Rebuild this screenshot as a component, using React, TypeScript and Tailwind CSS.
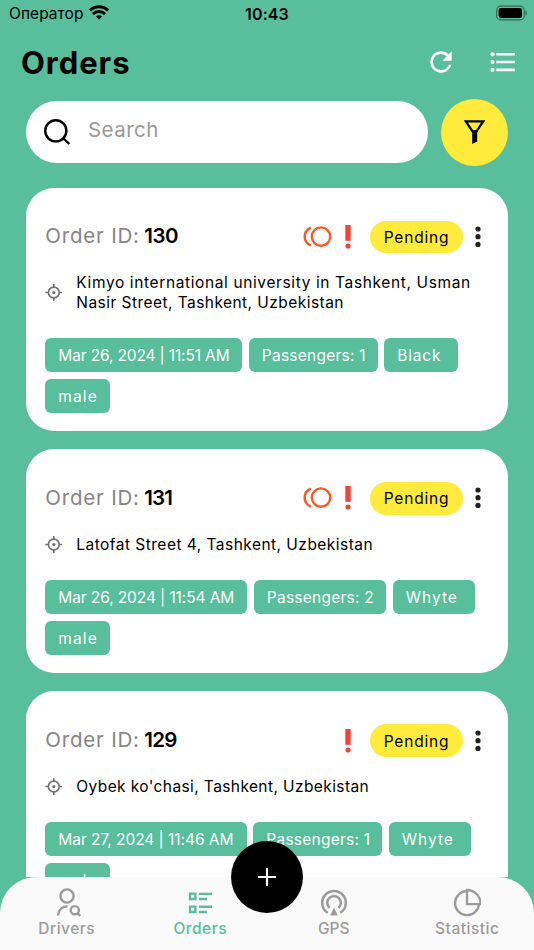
import React from 'react';
import { MdRefresh } from 'react-icons/md';
import clsx from 'clsx';

type Chip = { text: string; box: string; tracking: string };

type Order = {
  id: string;
  idTracking: string;
  toll: boolean;
  address: { text: string; tracking: string }[];
  chips: Chip[];
};

const male: Chip = { text: 'male', box: 'w-[65px]', tracking: 'tracking-[1.1px]' };

const orders: Order[] = [
  {
    id: '130',
    idTracking: 'tracking-[-0.5px]',
    toll: true,
    address: [
      { text: 'Kimyo international university in Tashkent, Usman', tracking: 'tracking-[0.62px]' },
      { text: 'Nasir Street, Tashkent, Uzbekistan', tracking: 'tracking-[0.45px]' },
    ],
    chips: [
      { text: 'Mar 26, 2024 | 11:51 AM', box: 'w-[197px]', tracking: 'tracking-[-0.14px]' },
      { text: 'Passengers: 1', box: 'w-[129px]', tracking: 'tracking-[0.25px]' },
      { text: 'Black', box: 'w-[73.5px]', tracking: 'tracking-[0.8px]' },
      male,
    ],
  },
  {
    id: '131',
    idTracking: 'tracking-[-0.9px]',
    toll: true,
    address: [{ text: 'Latofat Street 4, Tashkent, Uzbekistan', tracking: 'tracking-[0.47px]' }],
    chips: [
      { text: 'Mar 26, 2024 | 11:54 AM', box: 'w-[202px]', tracking: 'tracking-[-0.1px]' },
      { text: 'Passengers: 2', box: 'w-[132.5px]', tracking: 'tracking-[0.25px]' },
      { text: 'Whyte', box: 'w-[82px]', tracking: 'tracking-[1px]' },
      male,
    ],
  },
  {
    id: '129',
    idTracking: 'tracking-[-0.7px]',
    toll: false,
    address: [{ text: "Oybek ko'chasi, Tashkent, Uzbekistan", tracking: 'tracking-[0.4px]' }],
    chips: [
      { text: 'Mar 27, 2024 | 11:46 AM', box: 'w-[201.5px]', tracking: 'tracking-[-0.04px]' },
      { text: 'Passengers: 1', box: 'w-[129px]', tracking: 'tracking-[0.25px]' },
      { text: 'Whyte', box: 'w-[82px]', tracking: 'tracking-[1px]' },
      male,
    ],
  },
];

function StatusBar() {
  return (
    <div className="h-7 pl-[9px] pr-[6px] grid grid-cols-3 items-center text-[15.5px] leading-7 shrink-0">
      <div className="flex items-center gap-[5px]">
        <span className="tracking-[0.05px]">Оператор</span>
        <svg width="20" height="15" viewBox="0 0 20 15" fill="none" stroke="black" strokeWidth="2.9" className="-mt-[3px]">
          <path d="M1 5.4a12.8 12.8 0 0 1 18 0" />
          <path d="M4 9a8.5 8.5 0 0 1 12 0" />
          <path d="M10 14.6l-3-3a4.3 4.3 0 0 1 6 0z" fill="black" stroke="none" />
        </svg>
      </div>
      <span className="text-center font-semibold text-[16px] leading-[26px] tracking-[0.1px] -mt-px -ml-[3px]">10:43</span>
      <svg width="32" height="16" viewBox="0 0 32 16" className="justify-self-end -mt-[3px]">
        <rect x="0.6" y="1.1" width="27.6" height="13.8" rx="4" fill="none" stroke="black" strokeOpacity="0.45" strokeWidth="1.1" />
        <rect x="2.6" y="3" width="23.4" height="10" rx="2.2" fill="black" />
        <path d="M29.5 5.6c1.8.6 1.8 4.2 0 4.8z" fill="black" fillOpacity="0.5" />
      </svg>
    </div>
  );
}

function Header() {
  return (
    <header className="h-[70px] pl-[21px] pr-[19px] pb-[2px] flex items-center justify-between shrink-0">
      <h1 className="text-[31px] leading-none font-bold tracking-[0.95px]">Orders</h1>
      <div className="flex items-center gap-[33px] text-white">
        <MdRefresh className="size-[32px]" />
        <svg width="25" height="22" viewBox="0 0 25 22" fill="currentColor">
          <circle cx="2.5" cy="3.3" r="2.1" />
          <circle cx="2.5" cy="11" r="2.1" />
          <circle cx="2.5" cy="18.9" r="2.1" />
          <path d="M6.3 2h18.5v2.6H6.3zM6.3 9.7h18.5v2.6H6.3zM6.3 17.6h18.5v2.6H6.3z" />
        </svg>
      </div>
    </header>
  );
}

function SearchRow() {
  return (
    <div className="mt-[0.5px] px-[26px] flex items-center gap-[13px] shrink-0">
      <div className="h-[62.5px] w-[402px] rounded-full bg-white flex items-center pl-[17px] gap-[17px]">
        <svg width="28" height="28" viewBox="0 0 28 28" fill="none" stroke="black" strokeWidth="2.4">
          <circle cx="12.8" cy="12.8" r="10.6" />
          <path d="M20 20l6.3 6" />
        </svg>
        <span className="text-[20.5px] tracking-[0.45px] text-[#9a9a9a] -mt-[3px]">Search</span>
      </div>
      <button className="size-[67px] rounded-full bg-[#ffeb3b] flex items-center justify-center">
        <svg width="22" height="26" viewBox="0 0 22 26" fill="none">
          <path d="M1.8 2.4h17.4l-6.5 9.8H8.3z" stroke="black" strokeWidth="2.3" />
          <path d="M7.2 11h6.8l-.8 2.8v8.8L8.2 25V13.8z" fill="black" />
        </svg>
      </button>
    </div>
  );
}

function OrderCard({ order }: { order: Order }) {
  return (
    <article className="bg-white rounded-[28px] pt-[33px] pb-[18px] pl-[19.3px] pr-[20px] shrink-0">
      <div className="h-[32.5px] flex items-center">
        <span className="text-[20.5px] tracking-[0.8px] text-[#858585] mr-[5.5px] w-[93.5px] whitespace-nowrap">Order ID:</span>
        <span className={clsx('text-[20.5px] font-semibold', order.idTracking)}>{order.id}</span>
        <div className="ml-auto flex items-center">
          {order.toll && (
            <svg width="29" height="22" viewBox="0 0 29 22" fill="none" stroke="#ff5722" strokeWidth="2.4" className="mr-[13px]">
              <circle cx="18" cy="10.6" r="9.2" />
              <path d="M7.8 1.6C-.4 5.4-.4 15.8 7.8 19.6" />
            </svg>
          )}
          <svg width="6" height="24" viewBox="0 0 6 24" fill="#f44336" className="mr-[19px]">
            <path d="M.3 0h5.4v15.8H.3z" />
            <circle cx="3" cy="21" r="2.6" />
          </svg>
          <span className="w-[93px] h-[32.5px] rounded-full bg-[#ffeb3b] flex items-center justify-center text-[15.5px] tracking-[0.8px] pt-px">
            Pending
          </span>
          <svg width="6" height="22" viewBox="0 0 6 22" fill="#212121" className="ml-[12px] mr-[7px]">
            <circle cx="3" cy="3" r="2.6" />
            <circle cx="3" cy="10.7" r="2.6" />
            <circle cx="3" cy="18.4" r="2.6" />
          </svg>
        </div>
      </div>

      <div className="mt-[20px] flex items-center gap-[14px] text-[15.5px] leading-[19.5px]">
        <svg width="17" height="17" viewBox="0 0 17 17" fill="none" stroke="#707070" strokeWidth="1.6">
          <circle cx="8.8" cy="8.5" r="5.4" />
          <path d="M8.8 0v3M8.8 14v3M.3 8.5h3M14.3 8.5h2.7" />
          <circle cx="8.8" cy="8.5" r="1.6" fill="#707070" stroke="none" />
        </svg>
        <div>
          {order.address.map((line) => (
            <p key={line.text} className={clsx('whitespace-nowrap', line.tracking)}>{line.text}</p>
          ))}
        </div>
      </div>

      <div className="mt-[25.5px] flex flex-wrap gap-[6.5px]">
        {order.chips.map((chip) => (
          <span
            key={chip.text}
            className={clsx('h-[34.5px] rounded-md bg-[#58be9c] pl-[13px] pt-px flex items-center text-[15.5px] text-white whitespace-nowrap', chip.box, chip.tracking)}
          >
            {chip.text}
          </span>
        ))}
      </div>
    </article>
  );
}

function DriversIcon() {
  return (
    <svg width="28" height="30" viewBox="0 0 28 30" fill="none" stroke="currentColor" strokeWidth="2.4">
      <circle cx="14" cy="8" r="6.6" />
      <path d="M5 27.5a9.5 9.5 0 0 1 9.5-9.2" />
      <circle cx="21.8" cy="22.2" r="4.1" />
      <path d="M24.5 25.2l2.8 2.8" />
    </svg>
  );
}

function OrdersIcon() {
  return (
    <svg width="28" height="30" viewBox="0 0 28 30" fill="none" stroke="currentColor" strokeWidth="2.4">
      <path d="M4 5.6h5.4v5.4H4zM4 18.6h5.4V24H4z" />
      <path d="M13 5.9h13M13 11h8M13 18.8h13M13 24h8" />
    </svg>
  );
}

function GpsIcon() {
  return (
    <svg width="28" height="30" viewBox="0 0 28 30" fill="none" stroke="currentColor" strokeWidth="2.5">
      <path d="M7.8 24.8a11.8 11.8 0 1 1 12.4 0" />
      <path d="M9.6 19.9a6.8 6.8 0 1 1 8.8 0" />
      <path d="M14 19.6l3.8 8h-7.6z" fill="currentColor" stroke="none" />
    </svg>
  );
}

function StatisticIcon() {
  return (
    <svg width="28" height="30" viewBox="0 0 28 30" fill="none" stroke="currentColor" strokeWidth="2.3">
      <path d="M13.6 3.2a12 12 0 1 0 12.4 12.9" />
      <path d="M14 2v14.1h13.6A13.7 13.7 0 0 0 14 2z" />
    </svg>
  );
}

const tabs = [
  { label: 'Drivers', icon: DriversIcon, tracking: 'tracking-[0.5px]' },
  { label: 'Orders', icon: OrdersIcon, tracking: 'tracking-[0.5px]', active: true },
  { label: 'GPS', icon: GpsIcon, tracking: 'tracking-[0px]' },
  { label: 'Statistic', icon: StatisticIcon, tracking: 'tracking-[0.5px]' },
];

function TabBar() {
  return (
    <nav className="relative h-[72.6px] shrink-0 rounded-t-[36px] bg-[#fafafa] grid grid-cols-4">
      {tabs.map(({ label, icon: Icon, tracking, active }) => (
        <div key={label} className={clsx('flex flex-col items-center pt-[11px]', active ? 'text-[#58be9c]' : 'text-[#9b9b9b]')}>
          <Icon />
          <span className={clsx('mt-[1px] text-[15.5px] leading-[20px] font-medium', tracking)}>{label}</span>
        </div>
      ))}
      {/* Floating add button */}
      <button className="absolute left-1/2 -top-[36px] -translate-x-1/2 size-[72px] rounded-full bg-black flex items-center justify-center">
        <svg width="20" height="20" viewBox="0 0 20 20" stroke="white" strokeWidth="2.2">
          <path d="M10 1v18M1 10h18" />
        </svg>
      </button>
    </nav>
  );
}

export default function App() {
  return (
    <div className="w-[534px] h-[950px] overflow-hidden bg-[#58be9c] text-black flex flex-col font-['Inter','Noto_Sans',sans-serif]">
      <StatusBar />
      <Header />
      <SearchRow />
      <main className="flex-1 min-h-0 overflow-hidden mt-[22px] px-[26px] flex flex-col gap-[18.2px]">
        {orders.map((order) => (
          <OrderCard key={order.id} order={order} />
        ))}
      </main>
      <TabBar />
    </div>
  );
}
